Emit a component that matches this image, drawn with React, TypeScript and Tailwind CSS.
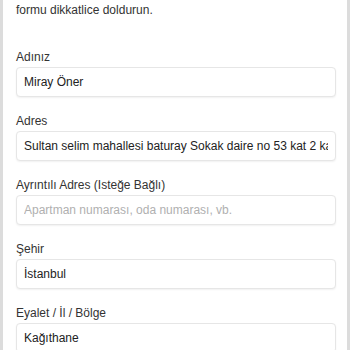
const fields = [
  { label: "Adınız", value: "Miray Öner" },
  { label: "Adres", value: "Sultan selim mahallesi baturay Sokak daire no 53 kat 2 kapı" },
  { label: "Ayrıntılı Adres (Isteğe Bağlı)", placeholder: "Apartman numarası, oda numarası, vb." },
  { label: "Şehir", value: "İstanbul" },
  { label: "Eyalet / İl / Bölge", value: "Kağıthane" },
];

export default function App() {
  return (
    <div className="w-[350px] h-[350px] overflow-hidden bg-white border-x-[3px] border-[#dcdcdc] font-['Liberation_Sans',Arial,sans-serif] text-[12px] text-[#333]">
      <div className="pl-[13px] pr-[11px]">
        <p className="leading-[20px] text-[#333]">formu dikkatlice doldurun.</p>
        <div className="mt-[28px] flex flex-col gap-[15px]">
          {fields.map((f) => (
            <div key={f.label} className="flex flex-col gap-[1px]">
              <label className="leading-[18px] text-[#333]">{f.label}</label>
              <input
                readOnly
                defaultValue={f.value}
                placeholder={f.placeholder}
                className="h-[30px] w-full rounded-[4px] border border-[#e6e6e6] bg-white px-[7px] text-[12px] text-[#222] shadow-[0_1px_2px_rgba(0,0,0,0.06)] outline-none placeholder:text-[#b0b0b0]"
              />
            </div>
          ))}
        </div>
      </div>
    </div>
  );
}
